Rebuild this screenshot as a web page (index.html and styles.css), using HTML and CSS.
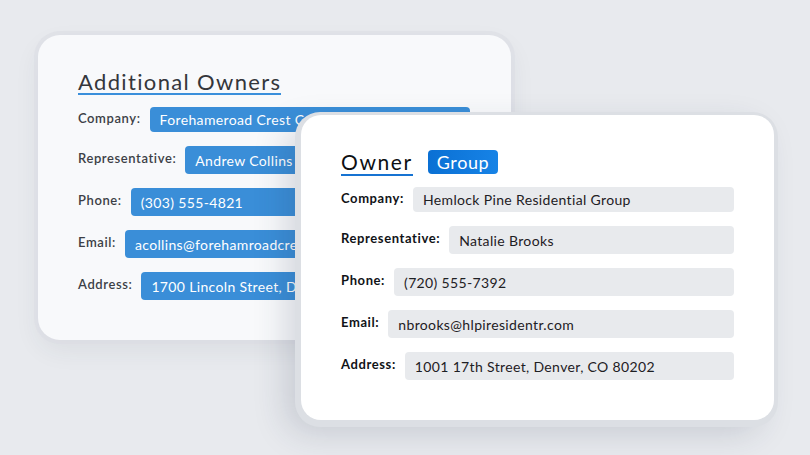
FILE: index.html
```html
<!DOCTYPE html>
<html>
<head>
<meta charset="utf-8">
<link rel="stylesheet" href="styles.css">
</head>
<body>
<div class="stage">
  <section class="card card-back">
    <header class="card-head">
      <h2 class="title title-back">Additional Owners</h2>
    </header>
    <div class="rows">
      <div class="row row-first"><span class="label">Company:</span><span class="field">Forehameroad Crest Capital LLC Partners</span></div>
      <div class="row"><span class="label">Representative:</span><span class="field">Andrew Collins</span></div>
      <div class="row"><span class="label">Phone:</span><span class="field">(303) 555-4821</span></div>
      <div class="row"><span class="label">Email:</span><span class="field">acollins@forehamroadcrest.com</span></div>
      <div class="row"><span class="label">Address:</span><span class="field">1700 Lincoln Street, Denver, CO 80203</span></div>
    </div>
  </section>

  <section class="card card-front">
    <header class="card-head">
      <h2 class="title title-front">Owner</h2>
      <span class="badge">Group</span>
    </header>
    <div class="rows">
      <div class="row row-first"><span class="label">Company:</span><span class="field">Hemlock Pine Residential Group</span></div>
      <div class="row"><span class="label">Representative:</span><span class="field">Natalie Brooks</span></div>
      <div class="row"><span class="label">Phone:</span><span class="field">(720) 555-7392</span></div>
      <div class="row"><span class="label">Email:</span><span class="field">nbrooks@hlpiresidentr.com</span></div>
      <div class="row"><span class="label">Address:</span><span class="field">1001 17th Street, Denver, CO 80202</span></div>
    </div>
  </section>
</div>
</body>
</html>
```
FILE: styles.css
```css
html, body {
  margin: 0;
  padding: 0;
}
body {
  background: #e8eaee;
  font-family: Lato, "Noto Sans", sans-serif;
  width: 810px;
  height: 455px;
  overflow: hidden;
}
.stage {
  position: relative;
  width: 810px;
  height: 455px;
  padding: 35px 0 0 38px;
  box-sizing: border-box;
}
.card {
  width: 473px;
  height: 305px;
  box-sizing: border-box;
  padding: 36px 41px 0 40px;
  border-radius: 22px;
  overflow: hidden;
}
.card-back {
  background: #f8f9fb;
  box-shadow: 0 0 0 4px rgba(218, 221, 227, 0.55), 0 10px 26px rgba(40, 50, 70, 0.07);
}
.card-front {
  position: absolute;
  left: 301px;
  top: 115px;
  background: #ffffff;
  padding-top: 35px;
  padding-right: 40px;
  border-radius: 20px;
  overflow: visible;
  box-shadow: -1px 2px 0 5px #dcdfe4, -14px 12px 34px rgba(40, 50, 80, 0.18);
}
.card-head {
  display: flex;
  align-items: flex-end;
  gap: 15px;
}
.title {
  margin: 0;
  font-weight: 400;
  display: inline-block;
}
.title-back {
  font-size: 22px;
  line-height: 22px;
  letter-spacing: 1.35px;
  color: #34363b;
  border-bottom: 2px solid #3a8fdb;
}
.title-front {
  font-size: 21px;
  line-height: 21px;
  letter-spacing: 1.6px;
  color: #0d0f12;
  padding-bottom: 2px;
  border-bottom: 2px solid #1673d2;
}
.badge {
  margin-bottom: 2px;
  height: 24px;
  line-height: 24px;
  padding: 0 9px;
  font-size: 18px;
  letter-spacing: 0.6px;
  color: #ffffff;
  border-radius: 4px;
  background: linear-gradient(90deg, #0a70d4, #1783e6);
}
.rows {
  display: flex;
  flex-direction: column;
  gap: 14px;
  margin-top: 12px;
}
.card-front .rows {
  margin-top: 11px;
}
.row {
  display: flex;
  align-items: center;
  gap: 9px;
  height: 28px;
}
.row-first {
  height: 25px;
}
.label {
  font-size: 13px;
  letter-spacing: 0.6px;
  padding-bottom: 4px;
  white-space: nowrap;
}
.card-back .label {
  font-weight: 600;
  color: #3c3f46;
}
.card-front .label {
  font-weight: 700;
  color: #111317;
}
.field {
  flex: 1;
  height: 100%;
  display: flex;
  align-items: center;
  padding: 0 10px;
  border-radius: 4px;
  font-size: 14px;
  letter-spacing: 0.35px;
  white-space: nowrap;
  overflow: hidden;
}
.card-back .field {
  background: #3a8ed8;
  color: #ffffff;
}
.card-front .field {
  background: #e8eaed;
  color: #1e2024;
}
```
